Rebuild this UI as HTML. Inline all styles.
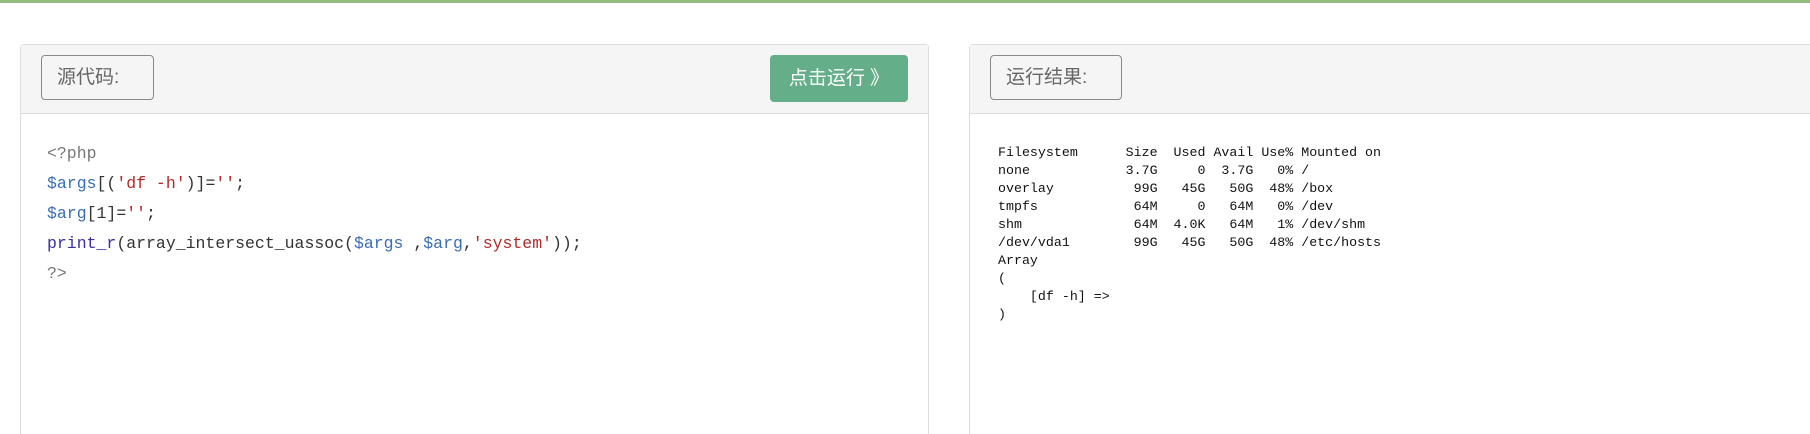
<!DOCTYPE html>
<html style="height:434px;overflow:hidden"><head><meta charset="utf-8"><style>
body{margin:0;width:1810px;height:434px;overflow:hidden;background:#fff;font-family:"Liberation Sans","Noto Sans CJK SC",sans-serif;position:relative}
.bar{position:absolute;left:0;top:0;width:1810px;height:3px;background:#93bd80}
.panel{position:absolute;top:44px;border:1px solid #ddd;border-radius:4px;background:#fff;height:395px}
.head{height:68px;background:#f5f5f5;border-bottom:1px solid #ddd;position:relative}
.lbl{position:absolute;top:10px;height:45px;border:1px solid #888;border-radius:4px;box-sizing:border-box;color:#666;font-size:19px;line-height:43px;padding-left:15px}
.btn{position:absolute;top:10px;height:47px;background:#64ae8a;border-radius:4px;color:#fff;font-size:19px;line-height:47px;text-align:center}
pre{margin:0;position:absolute}
.code{left:26px;top:94px;font-family:"Liberation Mono",monospace;font-size:16.5px;line-height:30px;color:#333}
.out{left:28px;top:99px;font-family:"Liberation Mono",monospace;font-size:13.3px;line-height:18px;color:#111}
.v{color:#3a6db5}.s{color:#b02a2a}.f{color:#3a2ea0}.g{color:#777}
</style></head><body>
<div class="bar"></div>
<div class="panel" style="left:20px;width:907px">
 <div class="head">
  <div class="lbl" style="left:20px;width:113px">源代码:</div>
  <div class="btn" style="left:749px;width:138px">点击运行 》</div>
 </div>
 <pre class="code"><span class="g">&lt;?php</span>
<span class="v">$args</span>[(<span class="s">'df -h'</span>)]=<span class="s">''</span>;
<span class="v">$arg</span>[1]=<span class="s">''</span>;
<span class="f">print_r</span>(array_intersect_uassoc(<span class="v">$args</span> ,<span class="v">$arg</span>,<span class="s">'system'</span>));
<span class="g">?&gt;</span></pre>
</div>
<div class="panel" style="left:969px;width:860px">
 <div class="head">
  <div class="lbl" style="left:20px;width:132px">运行结果:</div>
 </div>
 <pre class="out">Filesystem      Size  Used Avail Use% Mounted on
none            3.7G     0  3.7G   0% /
overlay          99G   45G   50G  48% /box
tmpfs            64M     0   64M   0% /dev
shm              64M  4.0K   64M   1% /dev/shm
/dev/vda1        99G   45G   50G  48% /etc/hosts
Array
(
    [df -h] =&gt; 
)</pre>
</div>
</body></html>
